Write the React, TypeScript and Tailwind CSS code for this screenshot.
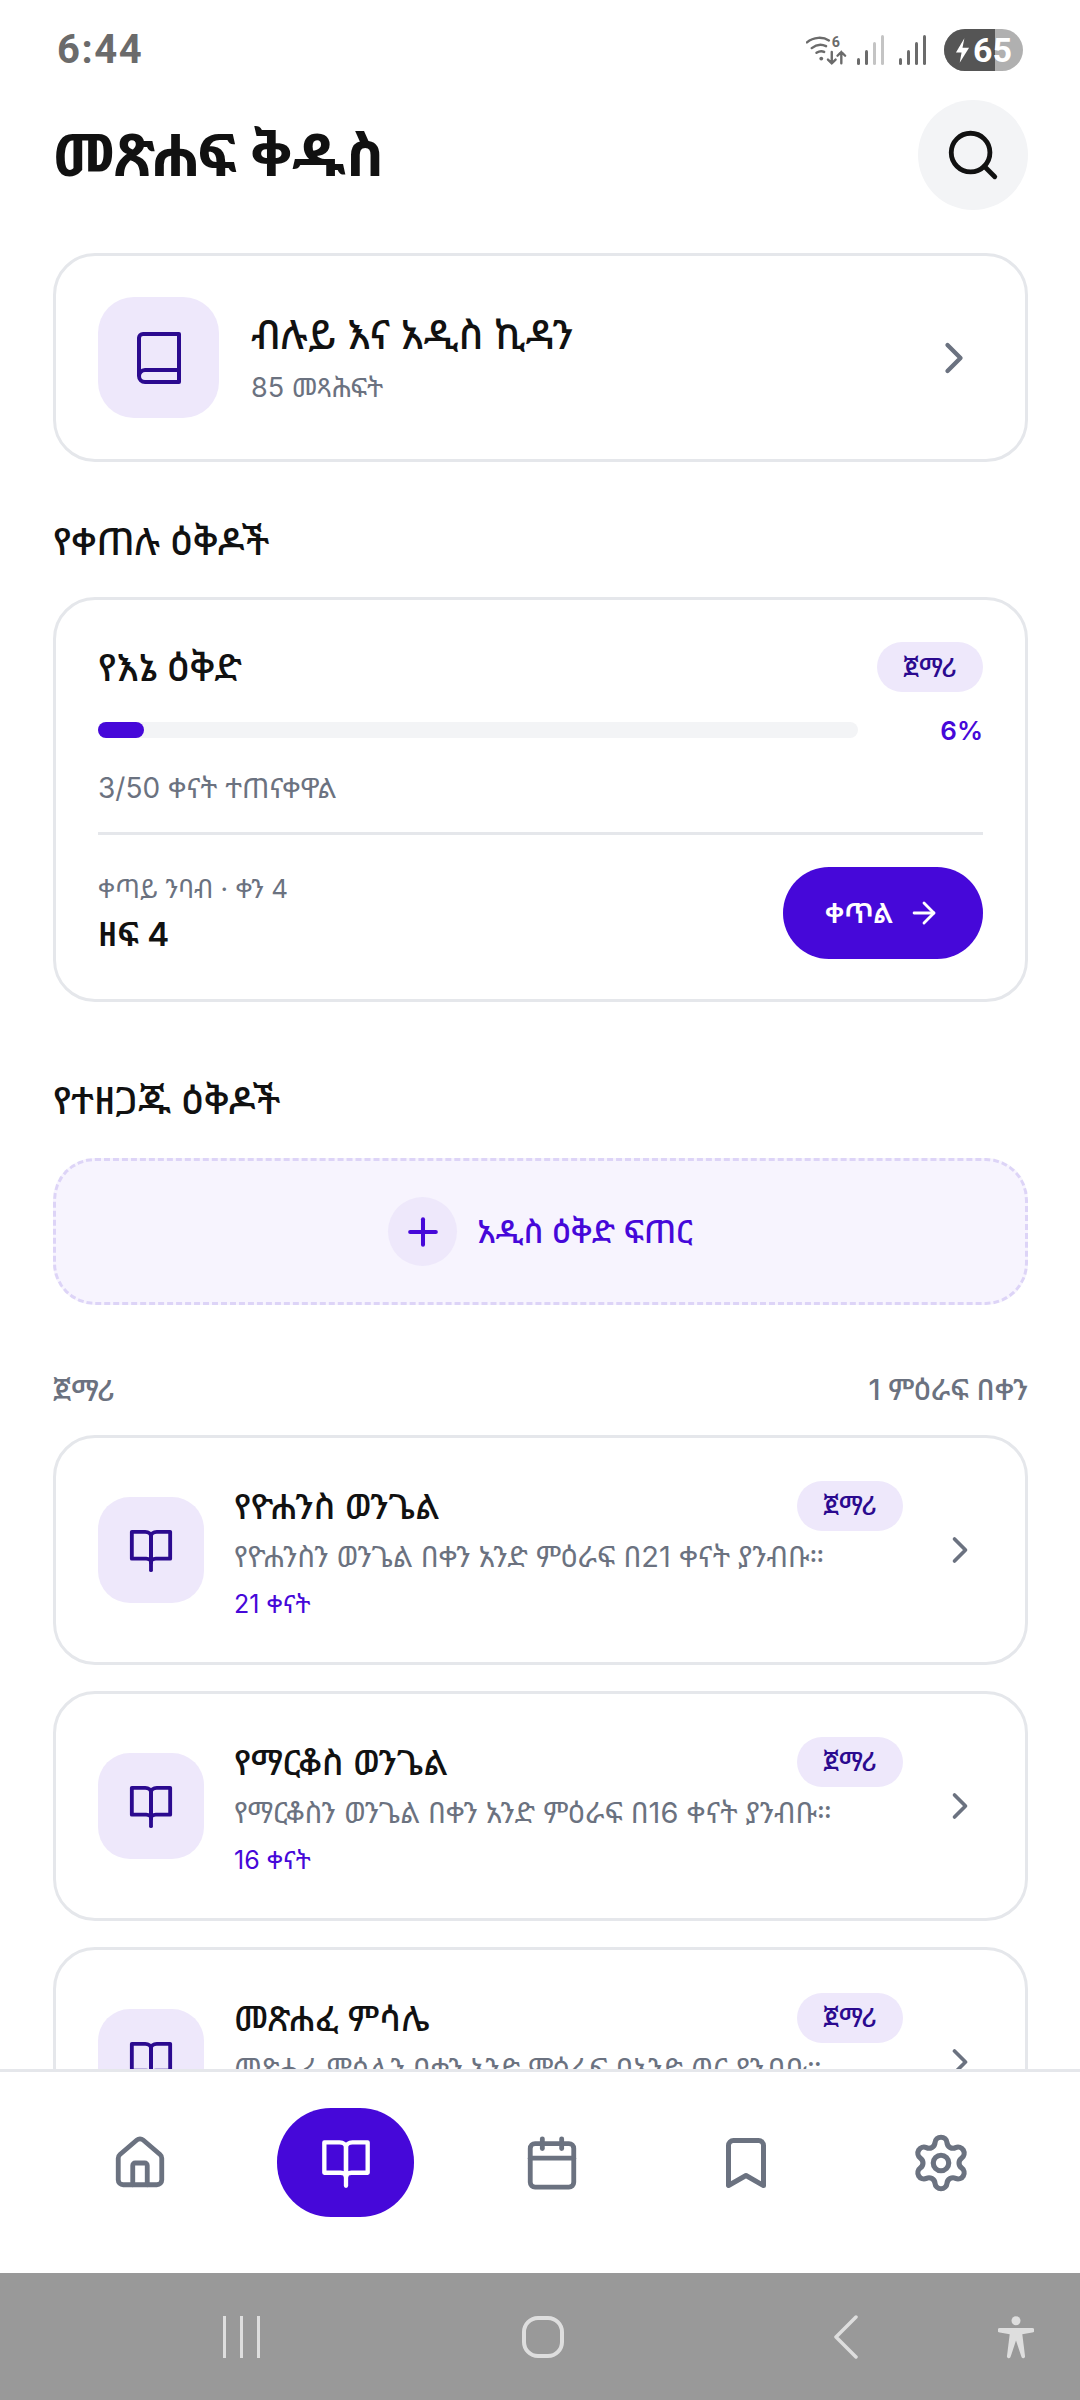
import { ArrowRight, Bookmark, Calendar, ChevronRight, House, Plus, Search, Settings } from "lucide-react";

const FONT = "font-['Inter','Noto_Sans_Ethiopic','Noto_Sans',sans-serif]";

function OpenBook({ className }: { className: string }) {
  return (
    <svg viewBox="0 0 48 48" fill="none" stroke="currentColor" strokeWidth="4" className={className}>
      <path d="M4 5h14c3.500 0 6 2 6 5v27c0-2-2-4-5-4H4z" strokeLinejoin="round" />
      <path d="M44 5H30c-3.500 0-6 2-6 5v27c0-2 2-4 5-4h15z" strokeLinejoin="round" />
      <path d="M24 36v9" strokeLinecap="round" />
    </svg>
  );
}

function Badge() {
  return (
    <span className="flex h-[50px] w-[106px] shrink-0 items-center justify-center rounded-[25px] bg-[#eee8fb] text-[26px] font-medium text-[#2b0a8f]">
      ጀማሪ
    </span>
  );
}

function PlanCard({ title, desc, days }: { title: string; desc: string; days: string }) {
  return (
    <div className="flex h-[230px] shrink-0 items-center rounded-[42px] border-[3px] border-[#e5e7eb] bg-white pl-[42px]">
      <div className="flex h-[106px] w-[106px] shrink-0 items-center justify-center rounded-[32px] bg-[#eee8fb] text-[#2b0a8f]">
        <OpenBook className="h-[46px] w-[46px]" />
      </div>
      <div className="ml-[30px] flex w-[669px] flex-col">
        <div className="flex items-center justify-between">
          <span className="text-[35px] font-medium leading-[50px] text-[#111111]">{title}</span>
          <Badge />
        </div>
        <span className="mt-[8px] w-[640px] truncate text-[29px] leading-[36px] text-[#6b7280]">{desc}</span>
        <span className="mt-[13px] text-[25px] leading-[32px] text-[#4608d9]">{days}</span>
      </div>
      <ChevronRight className="ml-[35px] h-[44px] w-[44px] text-[#6b7280]" strokeWidth={2} />
    </div>
  );
}

export default function App() {
  return (
    <div className={`flex h-[2400px] w-[1080px] flex-col overflow-hidden bg-white ${FONT}`}>
      {/* status bar */}
      <div className="flex h-[100px] shrink-0 items-center justify-between pl-[57px] pr-[57px]">
        <span className="font-['Roboto',sans-serif] text-[40px] font-bold tracking-[1.5px] text-[#6b6b6b]">6:44</span>
        <div className="flex items-center gap-[8px]">
          <svg viewBox="0 0 44 36" className="h-[38px] w-[42px] text-[#6b6b6b]" fill="none" stroke="currentColor" strokeWidth="2.500" strokeLinecap="round">
            <path d="M1 10c7-6 17-6 23-2M6 16c5-4 11-4 15-2M11 21c3-2 6-2 8-1" />
            <circle cx="16" cy="27" r="2" fill="currentColor" stroke="none" />
            <path d="M27 20v12M23 28l4 4 4-4M37 32V20M33 24l4-4 4 4" />
            <text x="27" y="15" fontSize="15" fontWeight="700" fill="currentColor" stroke="none" fontFamily="Roboto">6</text>
          </svg>
          <svg viewBox="0 0 30 32" className="h-[32px] w-[30px]">
            <rect x="1" y="24" width="3" height="7" rx="1.500" fill="#6b6b6b" />
            <rect x="9" y="16" width="3" height="15" rx="1.500" fill="#6b6b6b" />
            <rect x="17" y="8" width="3" height="23" rx="1.500" fill="#c4c4c4" />
            <rect x="25" y="1" width="3" height="30" rx="1.500" fill="#c4c4c4" />
          </svg>
          <svg viewBox="0 0 30 32" className="ml-[4px] h-[32px] w-[30px]">
            <rect x="1" y="24" width="3" height="7" rx="1.500" fill="#6b6b6b" />
            <rect x="9" y="16" width="3" height="15" rx="1.500" fill="#6b6b6b" />
            <rect x="17" y="8" width="3" height="23" rx="1.500" fill="#6b6b6b" />
            <rect x="25" y="1" width="3" height="30" rx="1.500" fill="#6b6b6b" />
          </svg>
          <div className="relative ml-[8px] flex h-[42px] w-[79px] items-center overflow-hidden rounded-[21px] bg-[#b0b0b0]">
            <div className="absolute left-0 top-0 h-full w-[51px] bg-[#555555]" />
            <svg viewBox="0 0 16 26" className="relative ml-[11px] h-[25px] w-[15px]" fill="#fff">
              <path d="M10 0 1 15h6l-2 11 10-16H8z" />
            </svg>
            <span className="relative ml-[3px] font-['Roboto',sans-serif] text-[34px] font-bold leading-none text-white">65</span>
          </div>
        </div>
      </div>

      {/* scrolling content */}
      <div className="flex min-h-0 flex-1 flex-col overflow-hidden pl-[53px] pr-[52px]">
        <div className="flex h-[110px] shrink-0 items-center justify-between">
          <h1 className="text-[59px] font-bold text-[#111111]">መጽሐፍ ቅዱስ</h1>
          <div className="flex h-[110px] w-[110px] items-center justify-center rounded-full bg-[#f3f4f6]">
            <Search className="h-[58px] w-[58px] text-[#111111]" strokeWidth={2} />
          </div>
        </div>

        <div className="mt-[43px] flex h-[209px] shrink-0 items-center rounded-[42px] border-[3px] border-[#e5e7eb] pl-[42px] pr-[45px]">
          <div className="flex h-[121px] w-[121px] items-center justify-center rounded-[36px] bg-[#eee8fb]">
            <svg viewBox="0 0 48 56" fill="none" stroke="#2b0a8f" strokeWidth="4" strokeLinejoin="round" className="h-[56px] w-[48px]">
              <path d="M4 46V8a4 4 0 0 1 4-4h36v48H10a6 6 0 0 1-6-6c0-3 2.500-6 6-6h34" />
            </svg>
          </div>
          <div className="ml-[32px] flex flex-1 flex-col">
            <span className="text-[40px] font-medium leading-[50px] text-[#111111]">ብሉይ እና አዲስ ኪዳን</span>
            <span className="mt-[10px] text-[27px] leading-[36px] text-[#6b7280]">85 መጻሕፍት</span>
          </div>
          <ChevronRight className="h-[52px] w-[52px] text-[#6b7280]" strokeWidth={2} />
        </div>

        <h2 className="mt-[54px] text-[38px] font-medium leading-[50px] text-[#111111]">የቀጠሉ ዕቅዶች</h2>

        <div className="mt-[31px] flex h-[405px] shrink-0 flex-col rounded-[42px] border-[3px] border-[#e5e7eb] px-[42px] pt-[42px]">
          <div className="flex h-[50px] items-center justify-between">
            <span className="text-[38px] font-medium text-[#111111]">የእኔ ዕቅድ</span>
            <Badge />
          </div>
          <div className="mt-[26px] flex h-[24px] items-center justify-between">
            <div className="h-[16px] w-[760px] rounded-full bg-[#f3f4f6]">
              <div className="h-full w-[46px] rounded-full bg-[#4608d9]" />
            </div>
            <span className="text-[26px] font-semibold text-[#4608d9]">6%</span>
          </div>
          <span className="mt-[28px] text-[28px] leading-[36px] text-[#6b7280]">3/50 ቀናት ተጠናቀዋል</span>
          <div className="mt-[26px] h-[3px] bg-[#e5e7eb]" />
          <div className="mt-[32px] flex items-center justify-between">
            <div className="flex flex-col">
              <span className="text-[26px] leading-[34px] text-[#6b7280]">ቀጣይ ንባብ · ቀን 4</span>
              <span className="mt-[8px] text-[33px] font-semibold leading-[40px] text-[#111111]">ዘፍ 4</span>
            </div>
            <div className="flex h-[92px] w-[200px] items-center justify-center gap-[14px] rounded-[46px] bg-[#4608d9] text-white">
              <span className="text-[28px] font-semibold">ቀጥል</span>
              <ArrowRight className="h-[34px] w-[34px]" strokeWidth={2} />
            </div>
          </div>
        </div>

        <h2 className="mt-[73px] text-[38px] font-medium leading-[50px] text-[#111111]">የተዘጋጁ ዕቅዶች</h2>

        <div className="mt-[33px] flex h-[147px] shrink-0 items-center justify-center gap-[20px] rounded-[42px] border-[3px] border-dashed border-[#ddd4f7] bg-[#f7f4fe]">
          <div className="flex h-[69px] w-[69px] items-center justify-center rounded-full bg-[#eee8fb]">
            <Plus className="h-[44px] w-[44px] text-[#4608d9]" strokeWidth={2.2} />
          </div>
          <span className="text-[32px] font-medium text-[#4608d9]">አዲስ ዕቅድ ፍጠር</span>
        </div>

        <div className="mt-[67px] flex h-[36px] shrink-0 items-center justify-between text-[29px] font-medium text-[#6b7280]">
          <span className="text-[30px]">ጀማሪ</span>
          <span>1 ምዕራፍ በቀን</span>
        </div>

        <div className="mt-[27px] flex flex-col gap-[26px]">
          <PlanCard title="የዮሐንስ ወንጌል" desc="የዮሐንስን ወንጌል በቀን አንድ ምዕራፍ በ21 ቀናት ያንብቡ።" days="21 ቀናት" />
          <PlanCard title="የማርቆስ ወንጌል" desc="የማርቆስን ወንጌል በቀን አንድ ምዕራፍ በ16 ቀናት ያንብቡ።" days="16 ቀናት" />
          <PlanCard title="መጽሐፈ ምሳሌ" desc="መጽሐፈ ምሳሌን በቀን አንድ ምዕራፍ በአንድ ወር ያንብቡ።" days="31 ቀናት" />
        </div>
      </div>

      {/* bottom tabs */}
      <div className="flex h-[204px] shrink-0 items-start justify-between border-t-[3px] border-[#e5e7eb] bg-white px-[83px] pt-[36px]">
        <div className="flex h-[109px] w-[113px] items-center justify-center">
          <House className="h-[58px] w-[58px] text-[#6b7280]" strokeWidth={2} />
        </div>
        <div className="flex h-[109px] w-[137px] items-center justify-center rounded-[54px] bg-[#4608d9] text-white">
          <OpenBook className="h-[52px] w-[52px]" />
        </div>
        <div className="flex h-[109px] w-[113px] items-center justify-center">
          <Calendar className="h-[58px] w-[58px] text-[#6b7280]" strokeWidth={2} />
        </div>
        <div className="flex h-[109px] w-[113px] items-center justify-center">
          <Bookmark className="h-[60px] w-[60px] text-[#6b7280]" strokeWidth={2} />
        </div>
        <div className="flex h-[109px] w-[113px] items-center justify-center">
          <Settings className="h-[62px] w-[62px] text-[#6b7280]" strokeWidth={2} />
        </div>
      </div>

      {/* android nav */}
      <div className="flex h-[127px] shrink-0 items-center bg-[#999999] text-[#dedede]">
        <div className="ml-[223px] flex h-[42px] gap-[14px]">
          <div className="h-full w-[3px] bg-[#dedede]" />
          <div className="h-full w-[3px] bg-[#dedede]" />
          <div className="h-full w-[3px] bg-[#dedede]" />
        </div>
        <div className="ml-[262px] h-[42px] w-[42px] rounded-[16px] border-[4px] border-[#dedede]" />
        <svg viewBox="0 0 28 44" fill="none" stroke="currentColor" strokeWidth="3.500" strokeLinecap="round" strokeLinejoin="round" className="ml-[268px] h-[44px] w-[28px]">
          <path d="M24 2 4 22l20 20" />
        </svg>
        <svg viewBox="0 0 40 46" fill="currentColor" className="ml-[138px] h-[46px] w-[36px]">
          <circle cx="20" cy="5" r="5" />
          <path d="M2 13h36a2 2 0 0 1 0 5l-11 2 3 24a2 2 0 0 1-4 1l-6-18-6 18a2 2 0 0 1-4-1l3-24-11-2a2 2 0 0 1 0-5z" />
        </svg>
      </div>
    </div>
  );
}
